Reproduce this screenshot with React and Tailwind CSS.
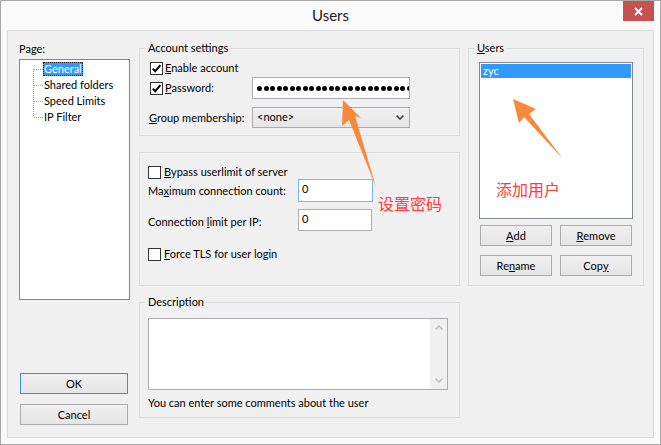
import React from 'react'

const TREE_ITEMS = ['General', 'Shared folders', 'Speed Limits', 'IP Filter']

function Check({ checked = false }) {
  return (
    <span className="flex h-[13px] w-[13px] shrink-0 items-center justify-center border border-[#333] bg-white">
      {checked && (
        <svg width="11" height="11" viewBox="0 0 11 11">
          <path d="M1.8 5.6 L4.2 8.2 L9.4 2.2" fill="none" stroke="#000" strokeWidth="2" />
        </svg>
      )}
    </span>
  )
}

function Btn({ children, primary = false, className = '' }) {
  return (
    <button
      type="button"
      className={`flex h-[21px] items-center justify-center border bg-linear-to-b from-[#f0f0f0] to-[#e5e5e5] leading-[16px] text-black ${
        primary ? 'border-[#3c8ee6]' : 'border-[#acacac]'
      } ${className}`}
    >
      {children}
    </button>
  )
}

function GroupBox({ label, className = '', children }) {
  return (
    <div className={`flex flex-col border border-[#dcdcdc] ${className}`}>
      {label && (
        <div className="-mt-[9px] ml-[6px] w-fit bg-[#f0f0f0] px-[2px] leading-[16px]">{label}</div>
      )}
      {children}
    </div>
  )
}

function Chevron({ up = false, color = '#bdbdbd' }) {
  return (
    <svg width="8" height="5" viewBox="0 0 8 5">
      <path
        d={up ? 'M0.6 4.4 L4 1 L7.4 4.4' : 'M0.6 0.6 L4 4 L7.4 0.6'}
        fill="none"
        stroke={color}
        strokeWidth="1.5"
      />
    </svg>
  )
}

function Annotations() {
  return (
    <div className="pointer-events-none absolute left-[-1px] top-[-1px] h-[445px] w-[661px]">
      <svg width="661" height="445" viewBox="0 0 661 445" className="absolute inset-0">
        <polygon points="343,100 361,118 355,116 376,187 349,120 342,126" fill="#f8893a" />
        <polygon points="513,99 536,109 529,114 563,159 524,117 519,123" fill="#f8893a" />
      </svg>
      <span className="absolute left-[378px] top-[195px] font-['Noto_Sans_CJK_SC',sans-serif] text-[16px] leading-[16px] text-[#ff3b3b]">
        设置密码
      </span>
      <span className="absolute left-[496px] top-[181px] font-['Noto_Sans_CJK_SC',sans-serif] text-[16px] leading-[16px] text-[#ff3b3b]">
        添加用户
      </span>
    </div>
  )
}

export default function App() {
  return (
    <div className="relative flex h-[445px] w-[661px] flex-col whitespace-nowrap border border-[#a8a8a8] bg-[#fafafa] font-['Lato','Liberation_Sans',sans-serif] text-[11px] text-black">
      {/* title bar */}
      <div className="relative flex h-[29px] shrink-0 items-center justify-center">
        <span className="text-[15px] text-[#1a1a1a]">Users</span>
        <button
          type="button"
          className="absolute right-[6px] top-0 flex h-[20px] w-[31px] items-center justify-center bg-[#c75050]"
        >
          <svg width="9" height="9" viewBox="0 0 9 9">
            <path d="M1 1 L8 8 M8 1 L1 8" stroke="#fff" strokeWidth="2" />
          </svg>
        </button>
      </div>

      {/* client area */}
      <div className="mx-[6px] mb-[6px] flex flex-1 border border-[#d9d9d9] bg-[#f0f0f0]">
        {/* left: pages */}
        <div className="ml-[11px] flex w-[111px] flex-col pb-[12px] pt-[10px]">
          <div className="leading-[16px]">Page:</div>
          <div className="mt-[2px] h-[241px] border border-[#828790] bg-white pt-[1px]">
            <div className="flex">
              <svg width="23" height="64" viewBox="0 0 23 64" className="shrink-0">
                <g stroke="#9a9a9a" strokeWidth="1" strokeDasharray="1 1" fill="none">
                  <path d="M13.5 8 V56" />
                  <path d="M14 8.5 H23 M14 24.5 H23 M14 40.5 H23 M14 56.5 H23" />
                </g>
              </svg>
              <div className="flex flex-col">
                {TREE_ITEMS.map((item, i) => (
                  <div key={item} className="flex h-[16px] items-center">
                    {i === 0 ? (
                      <span className="h-[14px] bg-[#3399ff] px-[1px] leading-[14px] text-white outline outline-1 outline-dotted outline-offset-[-1px] outline-[#222]">
                        {item}
                      </span>
                    ) : (
                      <span className="px-[1px] leading-[14px]">{item}</span>
                    )}
                  </div>
                ))}
              </div>
            </div>
          </div>
          <div className="mt-auto flex flex-col gap-[10px] pl-[1px]">
            <Btn primary className="w-[108px]">OK</Btn>
            <Btn className="w-[108px]">Cancel</Btn>
          </div>
        </div>

        {/* middle: settings */}
        <div className="ml-[9px] mt-[17px] flex w-[321px] flex-col">
          <GroupBox label="Account settings" className="h-[88px]">
            <label className="ml-[10px] mt-[4px] flex h-[16px] items-center gap-[2px]">
              <Check checked />
              <span>
                <u>E</u>nable account
              </span>
            </label>
            <div className="mt-[1px] flex h-[22px] items-center">
              <label className="ml-[10px] flex w-[102px] items-center gap-[2px]">
                <Check checked />
                <span>
                  <u>P</u>assword:
                </span>
              </label>
              <div className="flex h-[22px] w-[158px] items-center overflow-hidden border border-[#abadb3] bg-white pl-[4px]">
                {Array.from({ length: 24 }).map((_, i) => (
                  <span key={i} className="mr-[1.5px] h-[5px] w-[5px] shrink-0 rounded-full bg-black" />
                ))}
              </div>
            </div>
            <div className="mt-[8px] flex h-[21px] items-center">
              <span className="ml-[9px] w-[103px] pt-[2px]">
                <u>G</u>roup membership:
              </span>
              <div className="flex h-[21px] w-[158px] items-center justify-between border border-[#acacac] bg-linear-to-b from-[#f2f2f2] to-[#e5e5e5] pl-[4px] pr-[5px]">
                <span>&lt;none&gt;</span>
                <Chevron color="#444" />
              </div>
            </div>
          </GroupBox>

          <GroupBox className="mt-[16px] h-[134px]">
            <label className="ml-[8px] mt-[12px] flex h-[14px] items-center gap-[3px]">
              <Check />
              <span>
                <u>B</u>ypass userlimit of server
              </span>
            </label>
            <div className="flex h-[23px] items-center">
              <span className="ml-[8px] w-[150px] pt-[2px]">
                Ma<u>x</u>imum connection count:
              </span>
              <div className="h-[23px] w-[75px] border border-[#7eb4ea] bg-white pl-[3px] pt-[1px] leading-[16px]">0</div>
            </div>
            <div className="mt-[7px] flex h-[22px] items-center">
              <span className="ml-[8px] w-[150px] pt-[4px]">
                Connection <u>l</u>imit per IP:
              </span>
              <div className="h-[22px] w-[74px] border border-[#abadb3] bg-white pl-[3px] pt-[1px] leading-[16px]">0</div>
            </div>
            <label className="ml-[8px] mt-[16px] flex h-[14px] items-center gap-[3px]">
              <Check />
              <span>
                <u>F</u>orce TLS for user login
              </span>
            </label>
          </GroupBox>

          <GroupBox label="Description" className="mt-[16px] h-[116px]">
            <div className="ml-[8px] mt-[8px] flex h-[72px] w-[300px] border border-[#abadb3] bg-white">
              <div className="flex-1" />
              <div className="flex w-[17px] flex-col justify-between bg-[#f0f0f0]">
                <div className="flex h-[17px] items-center justify-center">
                  <Chevron up />
                </div>
                <div className="flex h-[17px] items-center justify-center">
                  <Chevron />
                </div>
              </div>
            </div>
            <p className="ml-[8px] mt-[5px] leading-[16px]">You can enter some comments about the user</p>
          </GroupBox>
        </div>

        {/* right: users */}
        <div className="ml-[8px] mt-[17px] w-[176px]">
          <GroupBox
            label={
              <>
                <u>U</u>sers
              </>
            }
            className="h-[238px]"
          >
            <div className="ml-[10px] mt-[6px] h-[157px] w-[154px] border border-[#828790] bg-white px-[1px] pt-[1px]">
              <div className="h-[14px] bg-[#3399ff] pl-[2px] leading-[14px] text-white">zyc</div>
            </div>
            <div className="ml-[11px] mt-[6px] grid grid-cols-[72px_72px] gap-x-[8px] gap-y-[9px]">
              <Btn>
                <u>A</u>dd
              </Btn>
              <Btn>
                <u>R</u>emove
              </Btn>
              <Btn>
                Re<u>n</u>ame
              </Btn>
              <Btn>
                Cop<u>y</u>
              </Btn>
            </div>
          </GroupBox>
        </div>
      </div>

      <Annotations />
    </div>
  )
}
